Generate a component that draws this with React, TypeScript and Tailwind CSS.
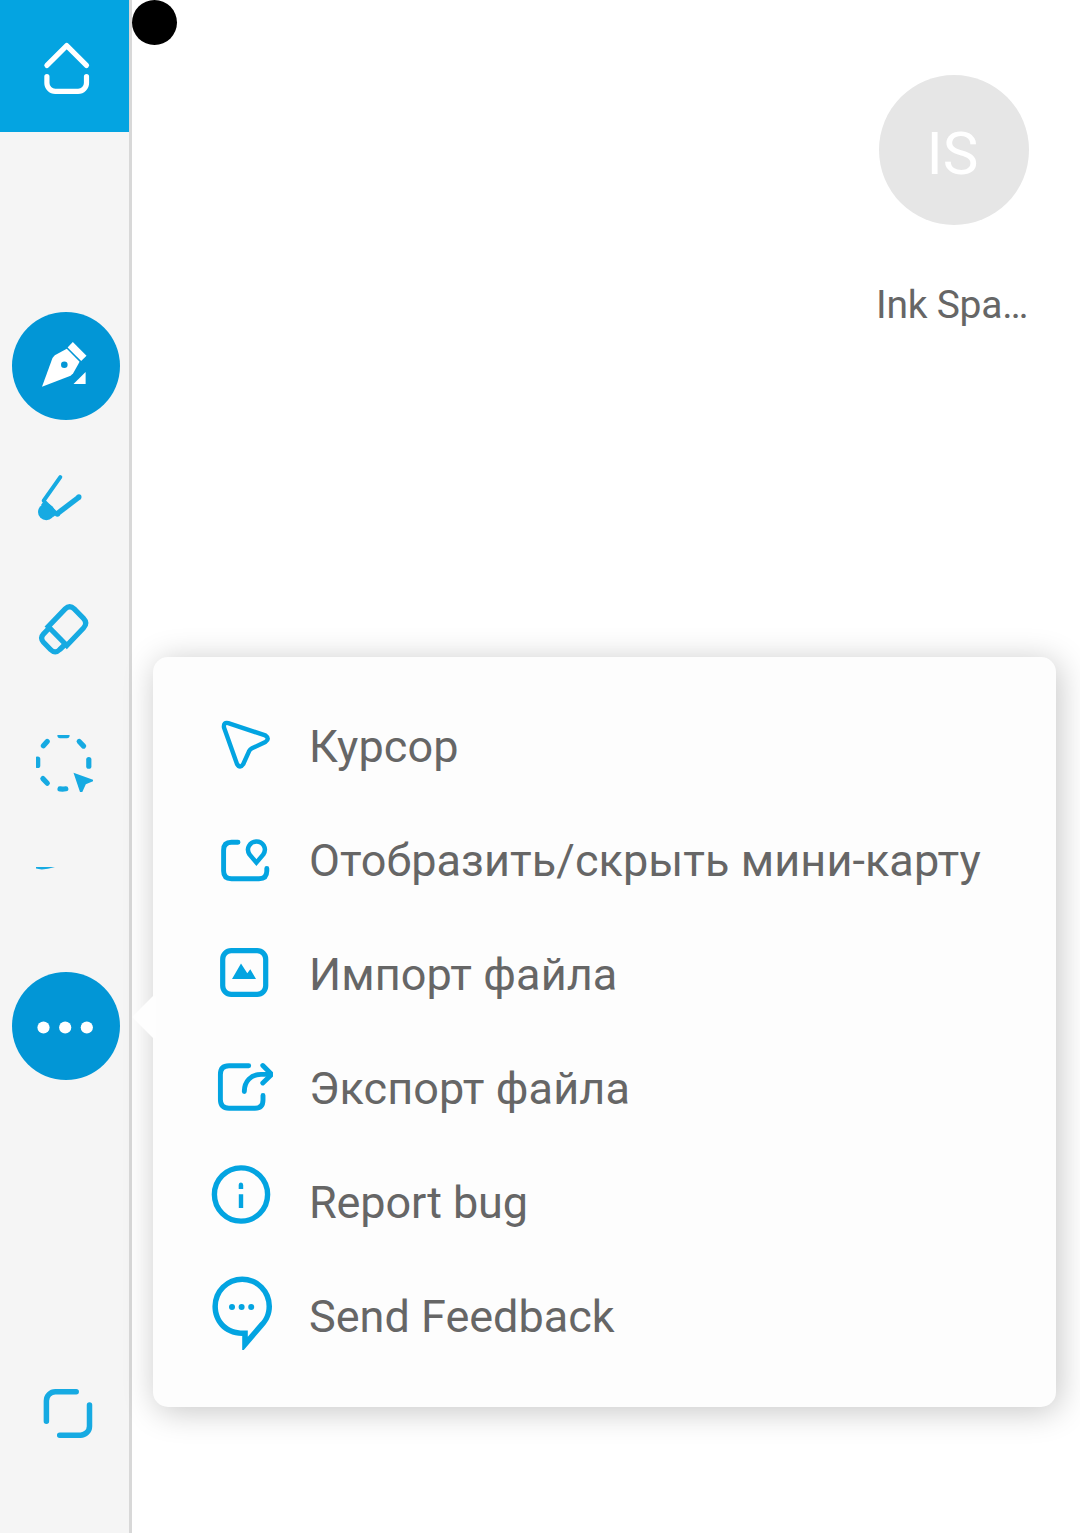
import type { ReactNode } from 'react';

function ToolIcon({ box, height = 132, children }: { box: string; height?: number; children: ReactNode }) {
  return (
    <svg width={129} height={height} viewBox={box} fill="none" className="block shrink-0">
      {children}
    </svg>
  );
}

const stroke = { stroke: '#16aae2', strokeWidth: 5.2, strokeLinecap: 'round', strokeLinejoin: 'round' } as const;
const menuStroke = { stroke: '#03a4e1', strokeWidth: 5.2, strokeLinecap: 'round', strokeLinejoin: 'round' } as const;

function Sidebar() {
  return (
    <aside className="flex h-full w-[132px] shrink-0 flex-col border-r-[3px] border-[#d8d8d8] bg-[#f5f5f5]">
      <button className="h-[132px] shrink-0 bg-[#04a4e1]" aria-label="Home">
        <ToolIcon box="0 0 129 132">
          <g stroke="#fff" strokeWidth="5.2" strokeLinecap="round" strokeLinejoin="round">
            <path d="M46.9 65.4 66.7 45.6 86.5 65.4" />
            <path d="M46.9 76.5V83a8.4 8.4 0 0 0 8.4 8.4h22.8a8.4 8.4 0 0 0 8.4-8.4v-6.5" />
          </g>
        </ToolIcon>
      </button>
      <nav className="mt-[168px] flex flex-col">
        <ToolIcon box="0 300 129 132">
          <circle cx="66" cy="366" r="54" fill="#0296d6" />
          <path d="M42 386.7 52.5 358 54.8 355.2 66.8 348.8 79.6 361.7 73.2 373.2 70.6 375.7Z" fill="#fff" />
          <path d="M72.8 342 86.5 355.7 81.2 361 67.6 347.4Z" fill="#fff" />
          <path d="M85.6 372V384H73.5Z" fill="#fff" />
          <circle cx="64.3" cy="364.7" r="3.3" fill="#0296d6" />
        </ToolIcon>
        <ToolIcon box="0 432 129 132">
          <circle cx="46.3" cy="512" r="8.3" fill="#16aae2" />
          <path d="M44.2 500.5 57.5 514 53 517 41 505Z" fill="#16aae2" />
          <path d="M60.3 477.2 43.7 500.6" {...stroke} strokeWidth="4" />
          <path d="M44 501 57 514" {...stroke} strokeWidth="3.5" />
          <path d="M79 497.2 57.3 513.6" {...stroke} strokeWidth="5.4" strokeLinecap="butt" />
          <circle cx="78.9" cy="496.9" r="2.6" fill="#16aae2" />
          <circle cx="57.4" cy="514" r="2.7" fill="#16aae2" />
        </ToolIcon>
        <ToolIcon box="0 564 129 132">
          <path d="M48.2 626.6 65.2 608.9Q69.7 604.4 74.2 608.9L83.5 618.4Q88 623.2 83.5 628L66.8 645.5Z" {...stroke} strokeLinejoin="miter" />
          <path d="M49 628.2 43.4 634.1Q39.8 638 43.5 642.2L50.5 649.5Q55.2 654.2 59.8 649.5L64.5 645" {...stroke} />
        </ToolIcon>
        <ToolIcon box="0 696 129 132">
          <svg x="36" y="735" width="58" height="57" viewBox="36 735 58 57">
            <g {...stroke}>
              <path d="M60 735.6H67" />
              <path d="M79.2 741.5 83.6 746.1" />
              <path d="M88.8 759.6V766.2" />
              <path d="M60 788.9Q63 789.2 65.8 788.8" />
              <path d="M42.9 778.6 47.3 783.2" />
              <path d="M37.7 759V765.5" />
              <path d="M47.2 741.5 43.4 745.7" />
            </g>
            <path d="M73.5 772.7 93 779.8V781.3L85.8 784.3 82.3 792H80Z" fill="#16aae2" />
          </svg>
        </ToolIcon>
        <ToolIcon box="0 828 129 42" height={42}>
          <path d="M36 867H55Q43 870.8 36 868.6Z" fill="#16aae2" />
        </ToolIcon>
      </nav>
      <div className="mt-[90px] shrink-0">
        <ToolIcon box="0 960 129 132">
          <circle cx="66" cy="1026" r="54" fill="#0296d6" />
          <g fill="#fff">
            <circle cx="43.5" cy="1027.5" r="6.1" />
            <circle cx="65.2" cy="1027.5" r="6.1" />
            <circle cx="86.8" cy="1027.5" r="6.1" />
          </g>
        </ToolIcon>
      </div>
      <div className="mt-auto mb-[53px] shrink-0">
        <ToolIcon box="0 1348 129 132">
          <g {...stroke} strokeWidth="5.5">
            <path d="M76.2 1391.7H55.4A9 9 0 0 0 46.4 1400.7V1421.3" />
            <path d="M89.5 1405V1426.2A9 9 0 0 1 80.5 1435.2H59.7" />
          </g>
        </ToolIcon>
      </div>
    </aside>
  );
}

const items: { label: string; box: string; tracking: string; icon: ReactNode }[] = [
  {
    label: 'Курсор',
    box: '200 690 90 114',
    tracking: 'tracking-[0.08px]',
    icon: (
      <path
        d="M228.3 723.1 265.3 735.4Q270.2 738.8 265.4 742L252 748.3Q250 749.3 249 751.3L243.3 764Q240 769 237 764L224 727.5Q223.3 722 228.3 723.1Z"
        {...menuStroke}
        strokeWidth="4.4"
      />
    ),
  },
  {
    label: 'Отобразить/скрыть мини-карту',
    box: '200 804 90 114',
    tracking: 'tracking-[0.08px]',
    icon: (
      <g {...menuStroke}>
        <path d="M238 842.2H231.5Q223.6 842.2 223.6 850.2V871Q223.6 878.8 231.5 878.8H259Q266.8 878.8 266.8 871V868.5" strokeWidth="4.9" />
        <path d="M256.4 862.6 249.5 854.5Q246.6 849.8 249 845.8C252.5 840.2 260.4 840.2 263.9 845.8Q266.2 849.8 263.3 854.5Z" strokeWidth="4.5" strokeLinejoin="miter" />
      </g>
    ),
  },
  {
    label: 'Импорт файла',
    box: '200 918 90 114',
    tracking: 'tracking-[0.12px]',
    icon: (
      <>
        <rect x="222.7" y="950.7" width="43" height="43.6" rx="8.5" {...menuStroke} />
        <path d="M232 979 241 963.5 247.3 973.2 250.3 969.3 256 979Z" fill="#03a4e1" />
      </>
    ),
  },
  {
    label: 'Экспорт файла',
    box: '200 1032 90 114',
    tracking: 'tracking-[0.12px]',
    icon: (
      <svg x="200" y="1032" width="73" height="114" viewBox="200 1032 73 114">
        <g {...menuStroke} strokeWidth="4.9">
          <path d="M248.7 1065.8H229Q220.4 1065.8 220.4 1074.5V1099.5Q220.4 1108.2 229 1108.2H255Q263 1108.2 263 1100V1095.5" />
          <path d="M244.3 1091.5C244.3 1081.3 251 1074.4 261 1074.4H270" />
          <path d="M262.8 1065.5 271.3 1073.9V1074.7L262.8 1083" />
        </g>
      </svg>
    ),
  },
  {
    label: 'Report bug',
    box: '200 1146 90 114',
    tracking: 'tracking-[-0.12px]',
    icon: (
      <>
        <circle cx="241" cy="1194.5" r="26.6" {...menuStroke} strokeWidth="5.4" />
        <path d="M238.7 1189V1184.7Q238.9 1182.4 241 1182.4Q243.2 1182.6 243.2 1185V1189ZM238.8 1194.2H243.2V1208H238.8Z" fill="#03a4e1" />
      </>
    ),
  },
  {
    label: 'Send Feedback',
    box: '200 1260 90 114',
    tracking: 'tracking-normal',
    icon: (
      <>
        <path
          d="M242.2 1350V1336C223 1335.5 212.4 1321.5 212.4 1306.2A29.8 29.8 0 0 1 272 1306.2C272 1314 269 1321 263.5 1327L243.8 1350ZM247.8 1330.5V1336.8L259.8 1322.8C264.3 1318.5 266.5 1313 266.5 1306.2A24.3 24.3 0 0 0 217.9 1306.2C217.9 1320 227.5 1330.5 243.5 1330.5Z"
          fill="#03a4e1"
          fillRule="evenodd"
        />
        <g fill="#03a4e1">
          <circle cx="232" cy="1307" r="3" />
          <circle cx="241.6" cy="1307" r="3" />
          <circle cx="251.2" cy="1307" r="3" />
        </g>
      </>
    ),
  },
];

function MoreMenu() {
  return (
    <div className="absolute top-[657px] left-[153px] h-[750px] w-[903px] rounded-[15px] bg-[#fdfdfd] pt-[33px] pl-[47px] shadow-[3px_4px_33px_rgba(0,0,0,0.23)]">
      <svg width="24" height="42" viewBox="0 0 24 42" className="absolute top-[339px] left-[-21px]">
        <path d="M0 21 21 0H24V42H21Z" fill="#fefefe" />
      </svg>
      <ul>
        {items.map((item) => (
          <li key={item.label} className="flex h-[114px] items-center">
            <svg width={90} height={114} viewBox={item.box} fill="none" className="shrink-0">
              {item.icon}
            </svg>
            <span className={`ml-[19px] text-[45px] leading-[54px] whitespace-nowrap text-[#666] ${item.tracking}`}>
              {item.label}
            </span>
          </li>
        ))}
      </ul>
    </div>
  );
}

export default function App() {
  return (
    <div className="relative flex h-[1533px] w-[1080px] overflow-hidden bg-white font-[Roboto,sans-serif]">
      <Sidebar />
      <main className="flex flex-1 items-start justify-between">
        <div className="size-[45px] rounded-full bg-black" />
        <div className="mt-[75px] mr-[51px] flex w-[156px] flex-col items-end">
          <div className="flex size-[150px] items-center justify-center rounded-full bg-[#e6e6e6] pt-[8px] pr-[3px] text-[60px] leading-none text-white">
            IS
          </div>
          <p className="mt-[57px] mr-px text-[39px] leading-[46px] tracking-[-0.25px] whitespace-nowrap text-[#666]">Ink Spa…</p>
        </div>
      </main>
      <MoreMenu />
    </div>
  );
}
